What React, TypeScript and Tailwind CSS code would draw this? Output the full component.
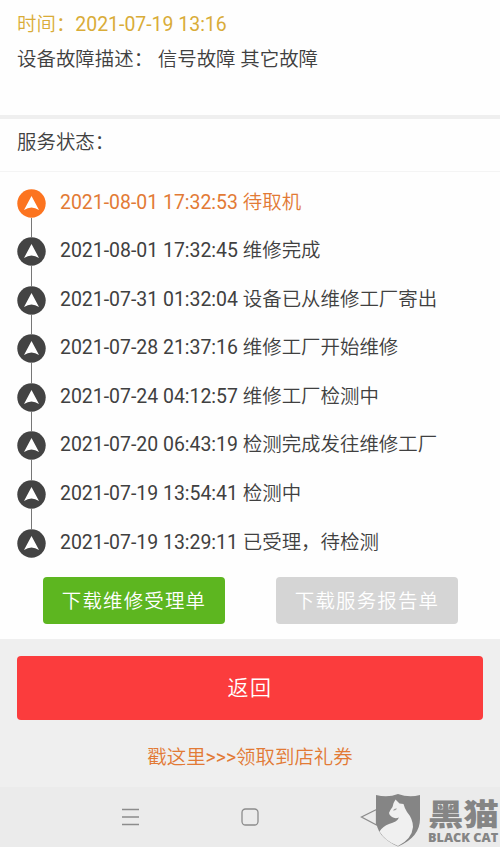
type Step = { time: string; label: string; active?: boolean };

const steps: Step[] = [
  { time: '2021-08-01 17:32:53', label: '待取机', active: true },
  { time: '2021-08-01 17:32:45', label: '维修完成' },
  { time: '2021-07-31 01:32:04', label: '设备已从维修工厂寄出' },
  { time: '2021-07-28 21:37:16', label: '维修工厂开始维修' },
  { time: '2021-07-24 04:12:57', label: '维修工厂检测中' },
  { time: '2021-07-20 06:43:19', label: '检测完成发往维修工厂' },
  { time: '2021-07-19 13:54:41', label: '检测中' },
  { time: '2021-07-19 13:29:11', label: '已受理，待检测' },
];

function Marker({ active }: { active?: boolean }) {
  return (
    <svg viewBox="0 0 29 29" className="block h-[29px] w-[29px] shrink-0">
      <circle cx="14.5" cy="14.5" r="14.2" fill={active ? '#fc7420' : '#434343'} />
      <path d="M14.500 7 L22 21 Q14.500 16 7 21 Z" fill="#fff" />
    </svg>
  );
}

function StepRow({ step, last }: { step: Step; last: boolean }) {
  return (
    <li className="flex h-[48.6px] items-start">
      <div className="flex h-full w-[29px] flex-col items-center">
        <Marker active={step.active} />
        {!last && <div className="w-px grow bg-[#777]" />}
      </div>
      <span
        className={`ml-[14px] h-[29px] whitespace-nowrap leading-[28px] ${
          step.active ? 'text-[#e27a35]' : 'text-[#404040]'
        }`}
      >
        <span className="font-normal">{step.time} </span>
        {step.label}
      </span>
    </li>
  );
}

function BlackCat() {
  return (
    <div className="absolute right-0 bottom-0 flex h-[54px] w-[125px] text-[#858585]">
      <svg viewBox="0 0 46 54" className="h-[54px] w-[46px] shrink-0">
        <path d="M1 2 Q13 5 23 1 Q34 5 45 2 V26 Q45 44 23 53.500 Q1 44 1 26 Z" fill="#858585" />
        <path
          d="M20.500 6.500 L24.500 10.500 L28.500 11 Q29.500 15 32 19 Q38 26 38 34 Q37 46 23 53 Q10 48 4.500 38.500 Q8 33 14 31 Q22 29 24 24.500 Q20 26 17 24 Q14 22 14 20 Q15 17 17.500 14 Q18 10 20.500 6.500 Z"
          fill="#f0f0f0"
        />
        <path d="M18 17.500 Q19 15 22 15.500 Q21 18 18 17.500" fill="#a2a2a2" />
      </svg>
      <div className="ml-[7px] flex w-[72px] flex-col pt-[3px]">
        <span className="w-[60px] origin-left scale-x-[1.18] font-['Noto_Sans_CJK_SC',sans-serif] text-[30px] leading-[33px] font-black whitespace-nowrap">
          黑猫
        </span>
        <span className="w-[60px] origin-left scale-x-[1.1] font-['Open_Sans',sans-serif] text-[11.5px] leading-[18px] font-extrabold whitespace-nowrap">
          BLACK CAT
        </span>
      </div>
    </div>
  );
}

export default function App() {
  return (
    <div className="flex h-[847px] w-[500px] flex-col overflow-hidden bg-[#efefef] font-[Roboto,'Noto_Sans_CJK_SC',sans-serif] text-[19.45px] font-[350] text-[#404040]">
      <section className="h-[115px] bg-[#fefefe] px-[17px] pt-[7px] leading-[35px]">
        <p className="text-[#d9ac38]">
          时间：<span className="font-normal">2021-07-19 13:16</span>
        </p>
        <p>设备故障描述： 信号故障 其它故障</p>
      </section>

      <section className="mt-1 flex h-[520px] flex-col bg-[#fefefe]">
        <h2 className="h-[53px] border-b border-[#f4f4f4] px-[17px] font-[350] leading-[48px]">服务状态：</h2>
        <ul className="h-[405px] pt-[16.5px] pl-[17px]">
          {steps.map((step, i) => (
            <StepRow key={step.time} step={step} last={i === steps.length - 1} />
          ))}
        </ul>
        <div className="flex justify-between pr-[42px] pl-[43px] text-white">
          <button className="h-[47px] w-[182px] rounded bg-[#5db620] pt-[3px] tracking-[1.2px]">
            下载维修受理单
          </button>
          <button className="h-[47px] w-[182px] rounded bg-[#d5d5d5] pt-[3px] tracking-[1.2px]">
            下载服务报告单
          </button>
        </div>
      </section>

      <section className="flex h-[148px] flex-col px-[17px] pt-[17px]">
        <button className="h-[64px] w-full rounded bg-[#fb3c3d] pt-[2px] text-[21px] tracking-[1.5px] text-white">
          返回
        </button>
        <a className="mt-[24px] text-center leading-[28px] text-[#e27a35]">
          戳这里<span className="font-normal">&gt;&gt;&gt;</span>领取到店礼券
        </a>
      </section>

      <nav className="relative flex grow items-center justify-center bg-[#ebebeb]">
        <svg viewBox="0 0 300 30" className="h-[30px] w-[300px]" fill="none" stroke="#8c8c8c" strokeWidth="1.3">
          <path d="M22 7.500 H39 M22 15 H39 M22 22.500 H39" />
          <rect x="142" y="7" width="16" height="16" rx="3.500" />
          <path d="M276.500 7.500 L261.500 15 L276.500 23 Z" />
        </svg>
        <BlackCat />
      </nav>
    </div>
  );
}
